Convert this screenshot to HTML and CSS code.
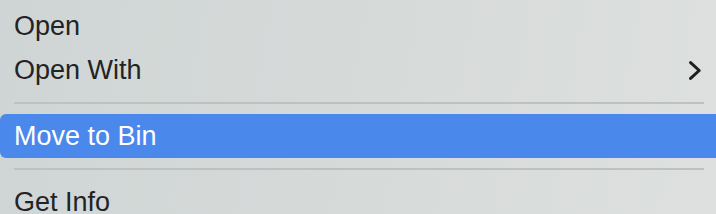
FILE: index.html
```html
<!DOCTYPE html>
<html lang="en">
<head>
<meta charset="utf-8">
<title>Context menu</title>
<link rel="stylesheet" href="styles.css">
</head>
<body>
<div class="menu">
  <div class="item"><span class="label">Open</span></div>
  <div class="item"><span class="label">Open With</span>
    <svg class="chevron" width="12" height="19" viewBox="0 0 12 19"><polyline points="1.6,1.6 10.2,9.5 1.6,17.4" fill="none" stroke="#1e1e1e" stroke-width="3" stroke-linecap="round" stroke-linejoin="round"/></svg>
  </div>
  <div class="sep"></div>
  <div class="item selected"><span class="label">Move to Bin</span></div>
  <div class="sep"></div>
  <div class="item"><span class="label">Get Info</span></div>
</div>
</body>
</html>
```

FILE: styles.css
```css
html, body {
  margin: 0;
  padding: 0;
  width: 716px;
  height: 214px;
  overflow: hidden;
}
body {
  background: linear-gradient(100deg, #cfd5d5 0%, #d6dad9 50%, #dde0de 100%);
  font-family: "Liberation Sans", Arial, sans-serif;
  color: #222324;
}
.menu {
  display: flex;
  flex-direction: column;
  padding-top: 4px;
}
.item {
  display: flex;
  align-items: center;
  justify-content: space-between;
  height: 44px;
  line-height: 44px;
  font-size: 27px;
  padding: 0 15px 0 14px;
}
.chevron {
  display: block;
}
.selected {
  background: #4a88ec;
  color: #ffffff;
  border-radius: 6px 0 0 6px;
}
.sep {
  height: 2px;
  background: #bdc1c1;
  margin: 10px 12px 10px 14px;
}
```
